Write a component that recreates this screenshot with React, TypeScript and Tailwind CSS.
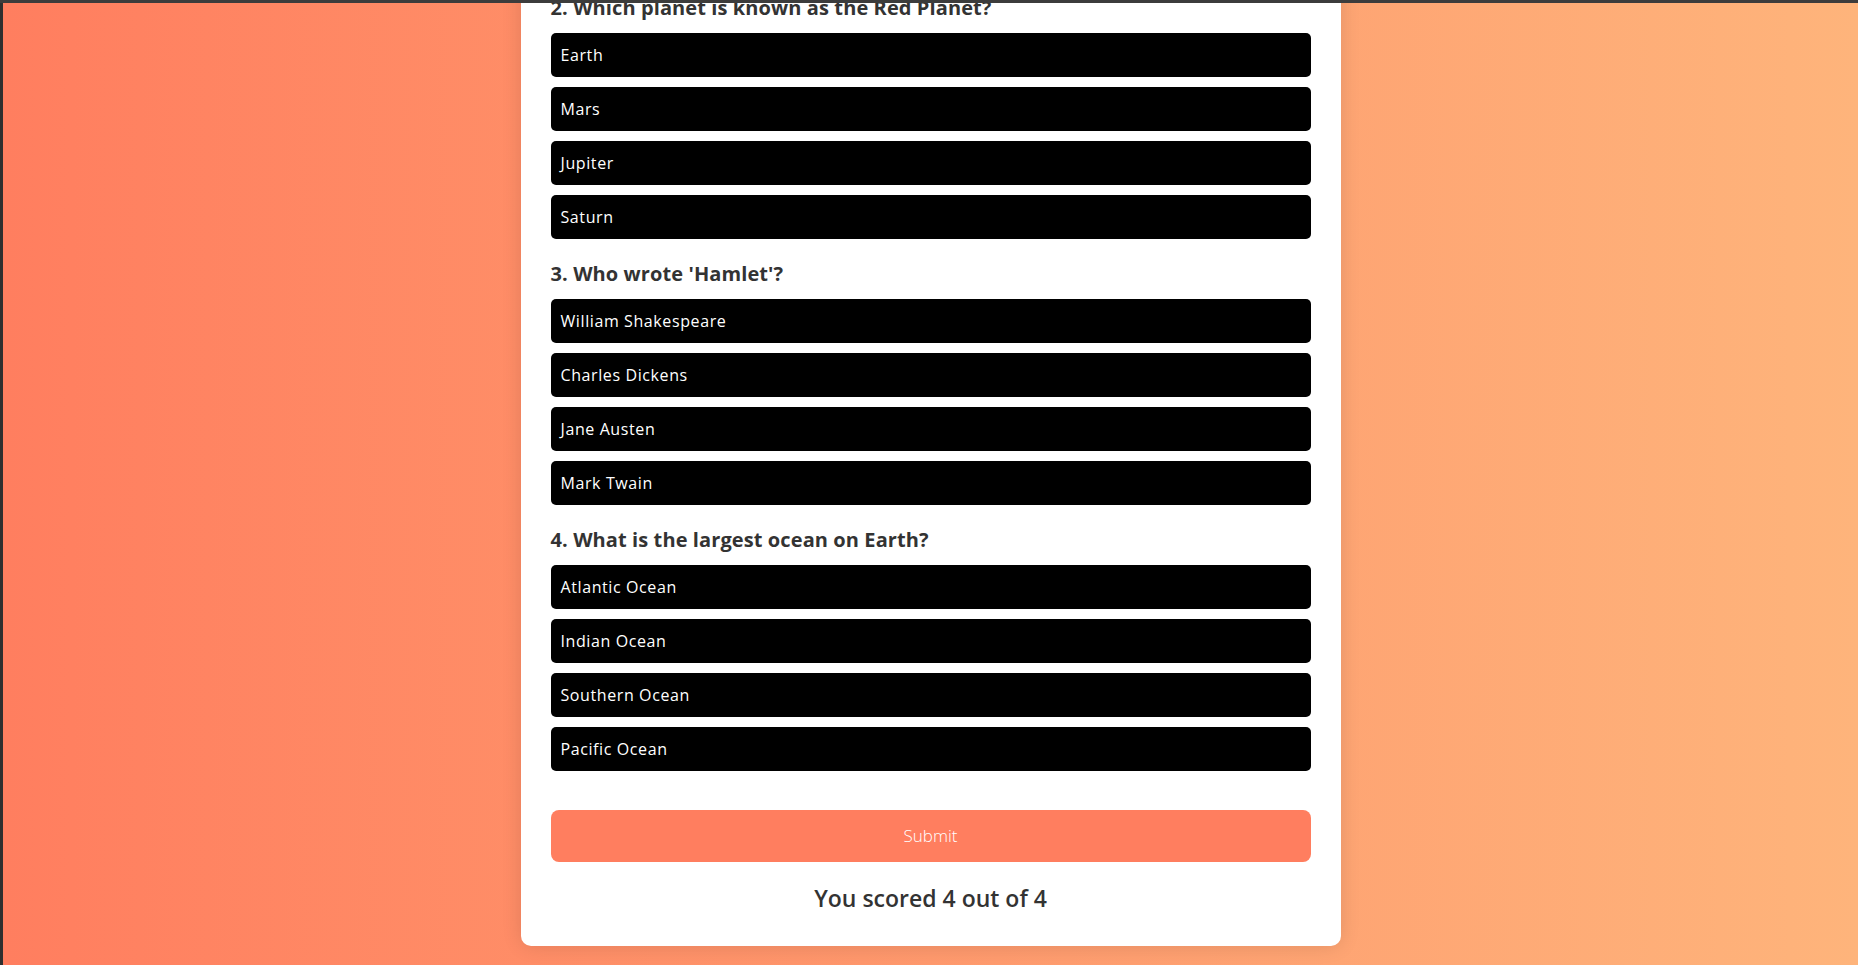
const questions = [
  {
    q: '2. Which planet is known as the Red Planet?',
    options: ['Earth', 'Mars', 'Jupiter', 'Saturn'],
  },
  {
    q: "3. Who wrote 'Hamlet'?",
    options: ['William Shakespeare', 'Charles Dickens', 'Jane Austen', 'Mark Twain'],
  },
  {
    q: '4. What is the largest ocean on Earth?',
    options: ['Atlantic Ocean', 'Indian Ocean', 'Southern Ocean', 'Pacific Ocean'],
  },
];

const App: React.FC = () => {
  return (
    <div className="flex h-[965px] flex-col overflow-hidden bg-[#2e2e2e] font-['Open_Sans',sans-serif]">
      <div className="h-[3px] shrink-0 bg-[#3c3c3c]" />
      <div className="ml-[3px] flex min-h-0 flex-1 justify-center overflow-hidden bg-[linear-gradient(to_right,#ff7e5f,#feb47b)]">
        {/* page is scrolled: top of the card sits above the viewport */}
        <div className="mt-[-40px] h-fit w-[820px] rounded-[10px] bg-white px-[30px] pb-[30px] pt-[30px] shadow-[0_0_20px_rgba(0,0,0,0.12)]">
          <div className="flex flex-col gap-[20px]">
            {questions.map((item) => (
              <section key={item.q}>
                <h3 className="mb-[10px] text-[20px] font-bold leading-[30px] tracking-[0.1px] text-[#333]">
                  {item.q}
                </h3>
                <div className="flex flex-col gap-[10px]">
                  {item.options.map((opt) => (
                    <button
                      key={opt}
                      type="button"
                      className="h-[44px] rounded-[5px] bg-black px-[10px] text-left text-[16px] leading-[24px] tracking-[0.6px] text-white"
                    >
                      {opt}
                    </button>
                  ))}
                </div>
              </section>
            ))}
          </div>

          <button
            type="button"
            className="mt-[39px] h-[52px] w-full rounded-[8px] bg-[#ff7e5f] text-[17px] font-light text-white"
          >
            Submit
          </button>

          <p className="mt-[18px] text-center text-[23px] font-semibold leading-[36px] text-[#333]">
            You scored 4 out of 4
          </p>
        </div>
      </div>
    </div>
  );
};

export default App;
